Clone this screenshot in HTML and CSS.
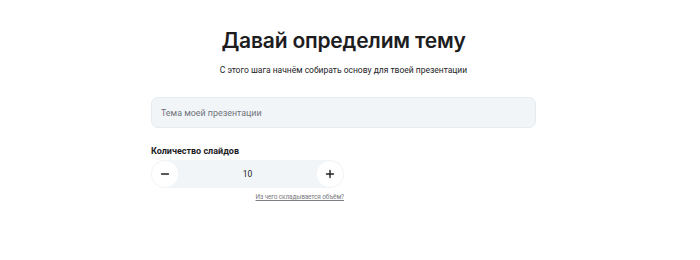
FILE: index.html
```html
<!DOCTYPE html>
<html lang="ru">
<head>
  <meta charset="UTF-8">
  <meta name="viewport" content="width=device-width, initial-scale=1.0">
  <title>Тема презентации</title>
  <link rel="stylesheet" href="styles.css">
</head>
<body>
  <div class="page">
    <div class="container">
      <h1>Давай определим тему</h1>
      <p class="subtitle">С этого шага начнём собирать основу для твоей презентации</p>
      <input class="topic" type="text" placeholder="Тема моей презентации">
      <div class="slides">
        <div class="label">Количество слайдов</div>
        <div class="stepper">
          <button class="step" type="button">
            <svg width="10" height="10" viewBox="0 0 10 10"><path d="M1.5 5h7" stroke="#222" stroke-width="1.4" stroke-linecap="round"/></svg>
          </button>
          <span class="value">10</span>
          <button class="step" type="button">
            <svg width="10" height="10" viewBox="0 0 10 10"><path d="M1.5 5h7M5 1.5v7" stroke="#222" stroke-width="1.4" stroke-linecap="round"/></svg>
          </button>
        </div>
        <a class="hint" href="#">Из чего складывается объём?</a>
      </div>
    </div>
  </div>
</body>
</html>
```

FILE: styles.css
```css
/* Общие стили */
body {
  margin: 0;
  background: #fff;
  color: #1d1d1f;
  font-family: Roboto, "Noto Sans", sans-serif;
}
.page {
  padding: 26px 13px 0 0;
}
.container {
  width: 385px;
  margin: 0 auto;
}
/* Заголовок */
h1 {
  margin: 0;
  text-align: center;
  font-family: Inter, sans-serif;
  font-size: 21px;
  font-weight: 600;
  letter-spacing: -0.2px;
  line-height: 30px;
}
.subtitle {
  margin: 8px 0 0;
  text-align: center;
  font-size: 8.5px;
  line-height: 12px;
}
/* Поле ввода темы */
.topic {
  display: block;
  box-sizing: border-box;
  width: 100%;
  height: 31px;
  margin-top: 21px;
  padding: 0 9px;
  border: 1px solid #e6ebf0;
  border-radius: 7px;
  background: #f1f5f8;
  font-family: inherit;
  font-size: 8.9px;
  color: #1d1d1f;
  outline: none;
}
.topic::placeholder {
  color: #707378;
}
/* Количество слайдов */
.slides {
  display: flex;
  flex-direction: column;
  align-items: flex-start;
  width: 193px;
  margin-top: 17px;
}
.label {
  font-size: 9px;
  font-weight: 700;
  line-height: 12px;
}
.stepper {
  display: flex;
  align-items: center;
  justify-content: space-between;
  box-sizing: border-box;
  width: 100%;
  height: 28px;
  margin-top: 3px;
  padding: 0 1px;
  border-radius: 14px;
  background: #f1f5f8;
}
.step {
  display: flex;
  align-items: center;
  justify-content: center;
  width: 26px;
  height: 26px;
  padding: 0;
  border: none;
  border-radius: 50%;
  background: #fff;
  cursor: pointer;
}
.value {
  font-size: 8.5px;
}
.hint {
  align-self: flex-end;
  margin-top: 5px;
  font-size: 6.5px;
  letter-spacing: -0.15px;
  color: #7a7d82;
  text-decoration: underline;
  text-underline-offset: 1px;
}
```
